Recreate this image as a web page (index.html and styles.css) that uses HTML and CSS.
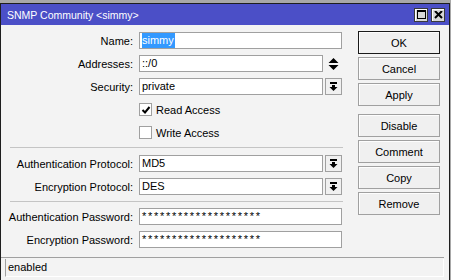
FILE: index.html
```html
<!DOCTYPE html>
<html lang="en">
<head>
  <meta charset="UTF-8" />
  <title>SNMP Community &lt;simmy&gt;</title>
  <link rel="stylesheet" href="styles.css">
</head>
<body>

  <div class="window">
    <!-- Title bar -->
    <div class="titlebar">
      <span class="title">SNMP Community &lt;simmy&gt;</span>
      <div class="title-btns">
        <span class="tbtn">
          <svg width="9" height="9" viewBox="0 0 9 9"><rect x="0.5" y="0.5" width="8" height="8" fill="none" stroke="#000"/><rect x="0" y="0" width="9" height="2" fill="#000"/></svg>
        </span>
        <span class="tbtn">
          <svg width="9" height="8" viewBox="0 0 9 8"><path d="M1 0 L8 7 M8 0 L1 7" stroke="#000" stroke-width="2"/></svg>
        </span>
      </div>
    </div>

    <div class="content">
      <!-- Form -->
      <div class="form">
        <div class="row">
          <label>Name:</label>
          <div class="input wide"><span class="sel">simmy</span></div>
        </div>
        <div class="row">
          <label>Addresses:</label>
          <div class="input">::/0</div>
          <span class="updown">
            <svg width="11" height="12" viewBox="0 0 11 12"><path d="M5.5 0 L10.5 5 L0.5 5 Z M0.5 7 L10.5 7 L5.5 12 Z" fill="#000"/></svg>
          </span>
        </div>
        <div class="row">
          <label>Security:</label>
          <div class="input">private</div>
          <span class="drop"><svg width="9" height="9" viewBox="0 0 9 9"><path d="M1 0 H8 V2 H1 Z M3 3 H6 V5 H8.5 L4.5 9 L0.5 5 H3 Z" fill="#000"/></svg></span>
        </div>
        <div class="row check">
          <span class="box"><svg width="10" height="10" viewBox="0 0 10 10"><path d="M1.5 5 L4 7.5 L8.5 2" fill="none" stroke="#000" stroke-width="2"/></svg></span>
          <span>Read Access</span>
        </div>
        <div class="row check">
          <span class="box"></span>
          <span>Write Access</span>
        </div>

        <div class="sep"></div>

        <div class="row">
          <label>Authentication Protocol:</label>
          <div class="input">MD5</div>
          <span class="drop"><svg width="9" height="9" viewBox="0 0 9 9"><path d="M1 0 H8 V2 H1 Z M3 3 H6 V5 H8.5 L4.5 9 L0.5 5 H3 Z" fill="#000"/></svg></span>
        </div>
        <div class="row">
          <label>Encryption Protocol:</label>
          <div class="input">DES</div>
          <span class="drop"><svg width="9" height="9" viewBox="0 0 9 9"><path d="M1 0 H8 V2 H1 Z M3 3 H6 V5 H8.5 L4.5 9 L0.5 5 H3 Z" fill="#000"/></svg></span>
        </div>

        <div class="sep sep2"></div>

        <div class="row">
          <label>Authentication Password:</label>
          <div class="input wide pw">********************</div>
        </div>
        <div class="row">
          <label>Encryption Password:</label>
          <div class="input wide pw">********************</div>
        </div>
      </div>

      <!-- Buttons -->
      <div class="buttons">
        <button class="default">OK</button>
        <button>Cancel</button>
        <button class="gap">Apply</button>
        <button>Disable</button>
        <button>Comment</button>
        <button>Copy</button>
        <button>Remove</button>
      </div>
    </div>

    <!-- Status bar -->
    <div class="status">
      <div class="status-cell">enabled</div>
    </div>
  </div>

</body>
</html>
```

FILE: styles.css
```css
* {
  box-sizing: border-box;
}
body {
  margin: 0;
  height: 280px;
  overflow: hidden;
  background: #a8a8a8;
  font-family: "Liberation Sans", Arial, sans-serif;
  font-size: 11px;
  color: #000;
}

/* Window */
.window {
  margin-top: 3px;
  width: 450px;
  height: 290px;
  border: 1px solid #1e1e1e;
  background: #f3f3f3;
  display: flex;
  flex-direction: column;
}

.titlebar {
  height: 21px;
  background: #4b4fc7;
  color: #fff;
  display: flex;
  align-items: center;
  justify-content: space-between;
  padding: 0 4px 0 6px;
}
.title {
  padding-top: 1px;
  font-size: 10.5px;
}
.title-btns {
  display: flex;
  gap: 3px;
}
.tbtn {
  width: 14px;
  height: 14px;
  background: #d8d8d8;
  border: 1px solid #3a3a3a;
  box-shadow: inset 1px 1px 0 #fff;
  display: flex;
  align-items: center;
  justify-content: center;
}

/* Main area */
.content {
  display: flex;
  height: 232px;
}
.form {
  width: 357px;
  padding-top: 7px;
}
.row {
  display: flex;
  align-items: center;
  height: 17px;
  margin-bottom: 6px;
}
.row label {
  width: 132px;
  text-align: right;
  margin-right: 6px;
  white-space: nowrap;
}
.input {
  width: 184px;
  height: 17px;
  background: #fff;
  border: 1px solid #a0a0a0;
  padding: 0 2px;
  line-height: 15px;
  white-space: nowrap;
}
.input.wide {
  width: 203px;
}
.sel {
  background: #3399ff;
  color: #fff;
  display: inline-block;
  padding-right: 1px;
}
.pw {
  letter-spacing: 1.7px;
}

.drop {
  width: 17px;
  height: 17px;
  margin-left: 2px;
  border: 1px solid #a0a0a0;
  background: #f0f0f0;
  display: flex;
  align-items: center;
  justify-content: center;
}
.updown {
  width: 17px;
  height: 17px;
  margin-left: 2px;
  display: flex;
  align-items: center;
  justify-content: center;
}

.check {
  padding-left: 138px;
}
.box {
  width: 13px;
  height: 13px;
  background: #fff;
  border: 1px solid #a0a0a0;
  margin-right: 4px;
  display: flex;
  align-items: center;
  justify-content: center;
}

.sep {
  width: 333px;
  height: 1px;
  margin: 0 0 7px 9px;
  background: #c4c4c4;
}
.sep2 {
  margin-top: 2px;
  margin-bottom: 6px;
}

/* Buttons column */
.buttons {
  width: 82px;
  padding-top: 6px;
  display: flex;
  flex-direction: column;
  gap: 3px;
}
button {
  height: 23px;
  margin: 0;
  padding: 0;
  font-family: inherit;
  font-size: 11px;
  color: #000;
  background: #f0f0f0;
  border: 1px solid #a0a0a0;
  box-shadow: inset 1px 1px 0 #fdfdfd;
  border-radius: 0;
}
button.default {
  border-color: #1a1a1a;
}
button.gap {
  margin-bottom: 5px;
}

/* Status bar */
.status {
  border-top: 1px solid #a0a0a0;
  width: 443px;
  padding: 1px 0 0 4px;
}
.status-cell {
  height: 18px;
  border-left: 1px solid #a0a0a0;
  border-right: 1px solid #fff;
  border-bottom: 1px solid #fff;
  padding-left: 2px;
  line-height: 17px;
}
```
